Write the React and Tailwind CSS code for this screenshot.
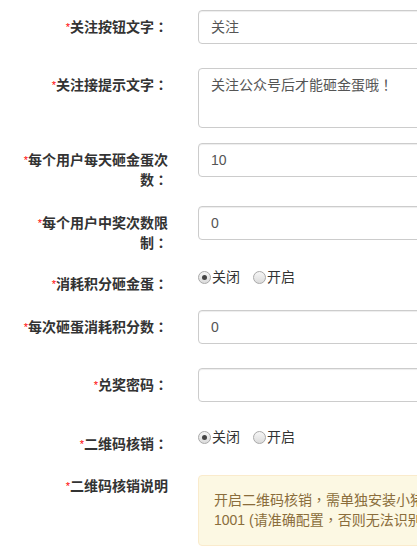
import React from 'react'

const font = { fontFamily: '"Liberation Sans", "Noto Sans CJK SC", sans-serif' }

// full-width punctuation centered in its box, like the reference's font
function P({ children }) {
  return <span className="leading-[0]" style={{ fontFamily: '"Noto Sans CJK TC", sans-serif' }}>{children}</span>
}

function Label({ text, colon = true, pad = 'pt-[7px]' }) {
  return (
    <div className={`w-[150px] ml-[18px] mr-[30px] shrink-0 text-right text-[14px] leading-[20px] font-bold text-[#333] ${pad}`}>
      <span className="text-[#f00] text-[11px] font-normal align-top">*</span>
      {text}
      {colon && <P>：</P>}
    </div>
  )
}

function TextInput({ value }) {
  return (
    <div className="w-[420px] h-[34px] border border-[#ccc] rounded-[4px] bg-white px-[12px] flex items-center text-[14px] text-[#555] shadow-[inset_0_1px_1px_rgba(0,0,0,0.075)]">
      {value}
    </div>
  )
}

function Radio({ checked, label }) {
  return (
    <span className="inline-flex items-center h-[20px] text-[14px] leading-[20px] text-[#333]">
      <span className="w-[13px] h-[13px] rounded-full border border-[#a9a9a9] bg-gradient-to-b from-[#f6f6f6] to-[#dcdcdc] flex items-center justify-center">
        {checked && <span className="w-[5px] h-[5px] rounded-full bg-[#444]" />}
      </span>
      <span className="ml-[1px]">{label}</span>
    </span>
  )
}

function Radios() {
  return (
    <div className="flex items-start gap-[13px]">
      <Radio checked label="关闭" />
      <Radio label="开启" />
    </div>
  )
}

export default function App() {
  return (
    <div className="w-[417px] h-[550px] overflow-hidden bg-white" style={font}>
      <div className="w-[700px] flex flex-col pt-[10px]">
        <div className="flex">
          <Label text="关注按钮文字" />
          <TextInput value="关注" />
        </div>

        <div className="flex mt-[24px]">
          <Label text="关注接提示文字" />
          <div className="w-[420px] h-[60px] border border-[#ccc] rounded-[4px] bg-white px-[12px] pt-[6px] text-[14px] leading-[20px] text-[#555]">
            关注公众号后才能砸金蛋哦<P>！</P>
          </div>
        </div>

        <div className="flex mt-[15px]">
          <Label text="每个用户每天砸金蛋次数" />
          <TextInput value="10" />
        </div>

        <div className="flex mt-[16px]">
          <Label text="每个用户中奖次数限制" />
          <TextInput value="0" />
        </div>

        <div className="flex mt-[14px]">
          <Label text="消耗积分砸金蛋" />
          <Radios />
        </div>

        <div className="flex mt-[16px]">
          <Label text="每次砸蛋消耗积分数" />
          <TextInput value="0" />
        </div>

        <div className="flex mt-[24px]">
          <Label text="兑奖密码" />
          <TextInput value="" />
        </div>

        <div className="flex mt-[25px]">
          <Label text="二维码核销" />
          <Radios />
        </div>

        <div className="flex mt-[21px]">
          <Label text="二维码核销说明" colon={false} pad="pt-[1px]" />
          <div className="w-[420px] h-[71px] border border-[#faebcc] rounded-[4px] bg-[#fcf8e3] px-[15px] pt-[14px] text-[14px] leading-[20px] text-[#8a6d3b] whitespace-nowrap overflow-hidden">
            <div>开启二维码核销<P>，</P>需单独安装小猪核销插件<P>，</P>并设置端口为</div>
            <div>1001 (请准确配置<P>，</P>否则无法识别二维码)</div>
          </div>
        </div>
      </div>
    </div>
  )
}
